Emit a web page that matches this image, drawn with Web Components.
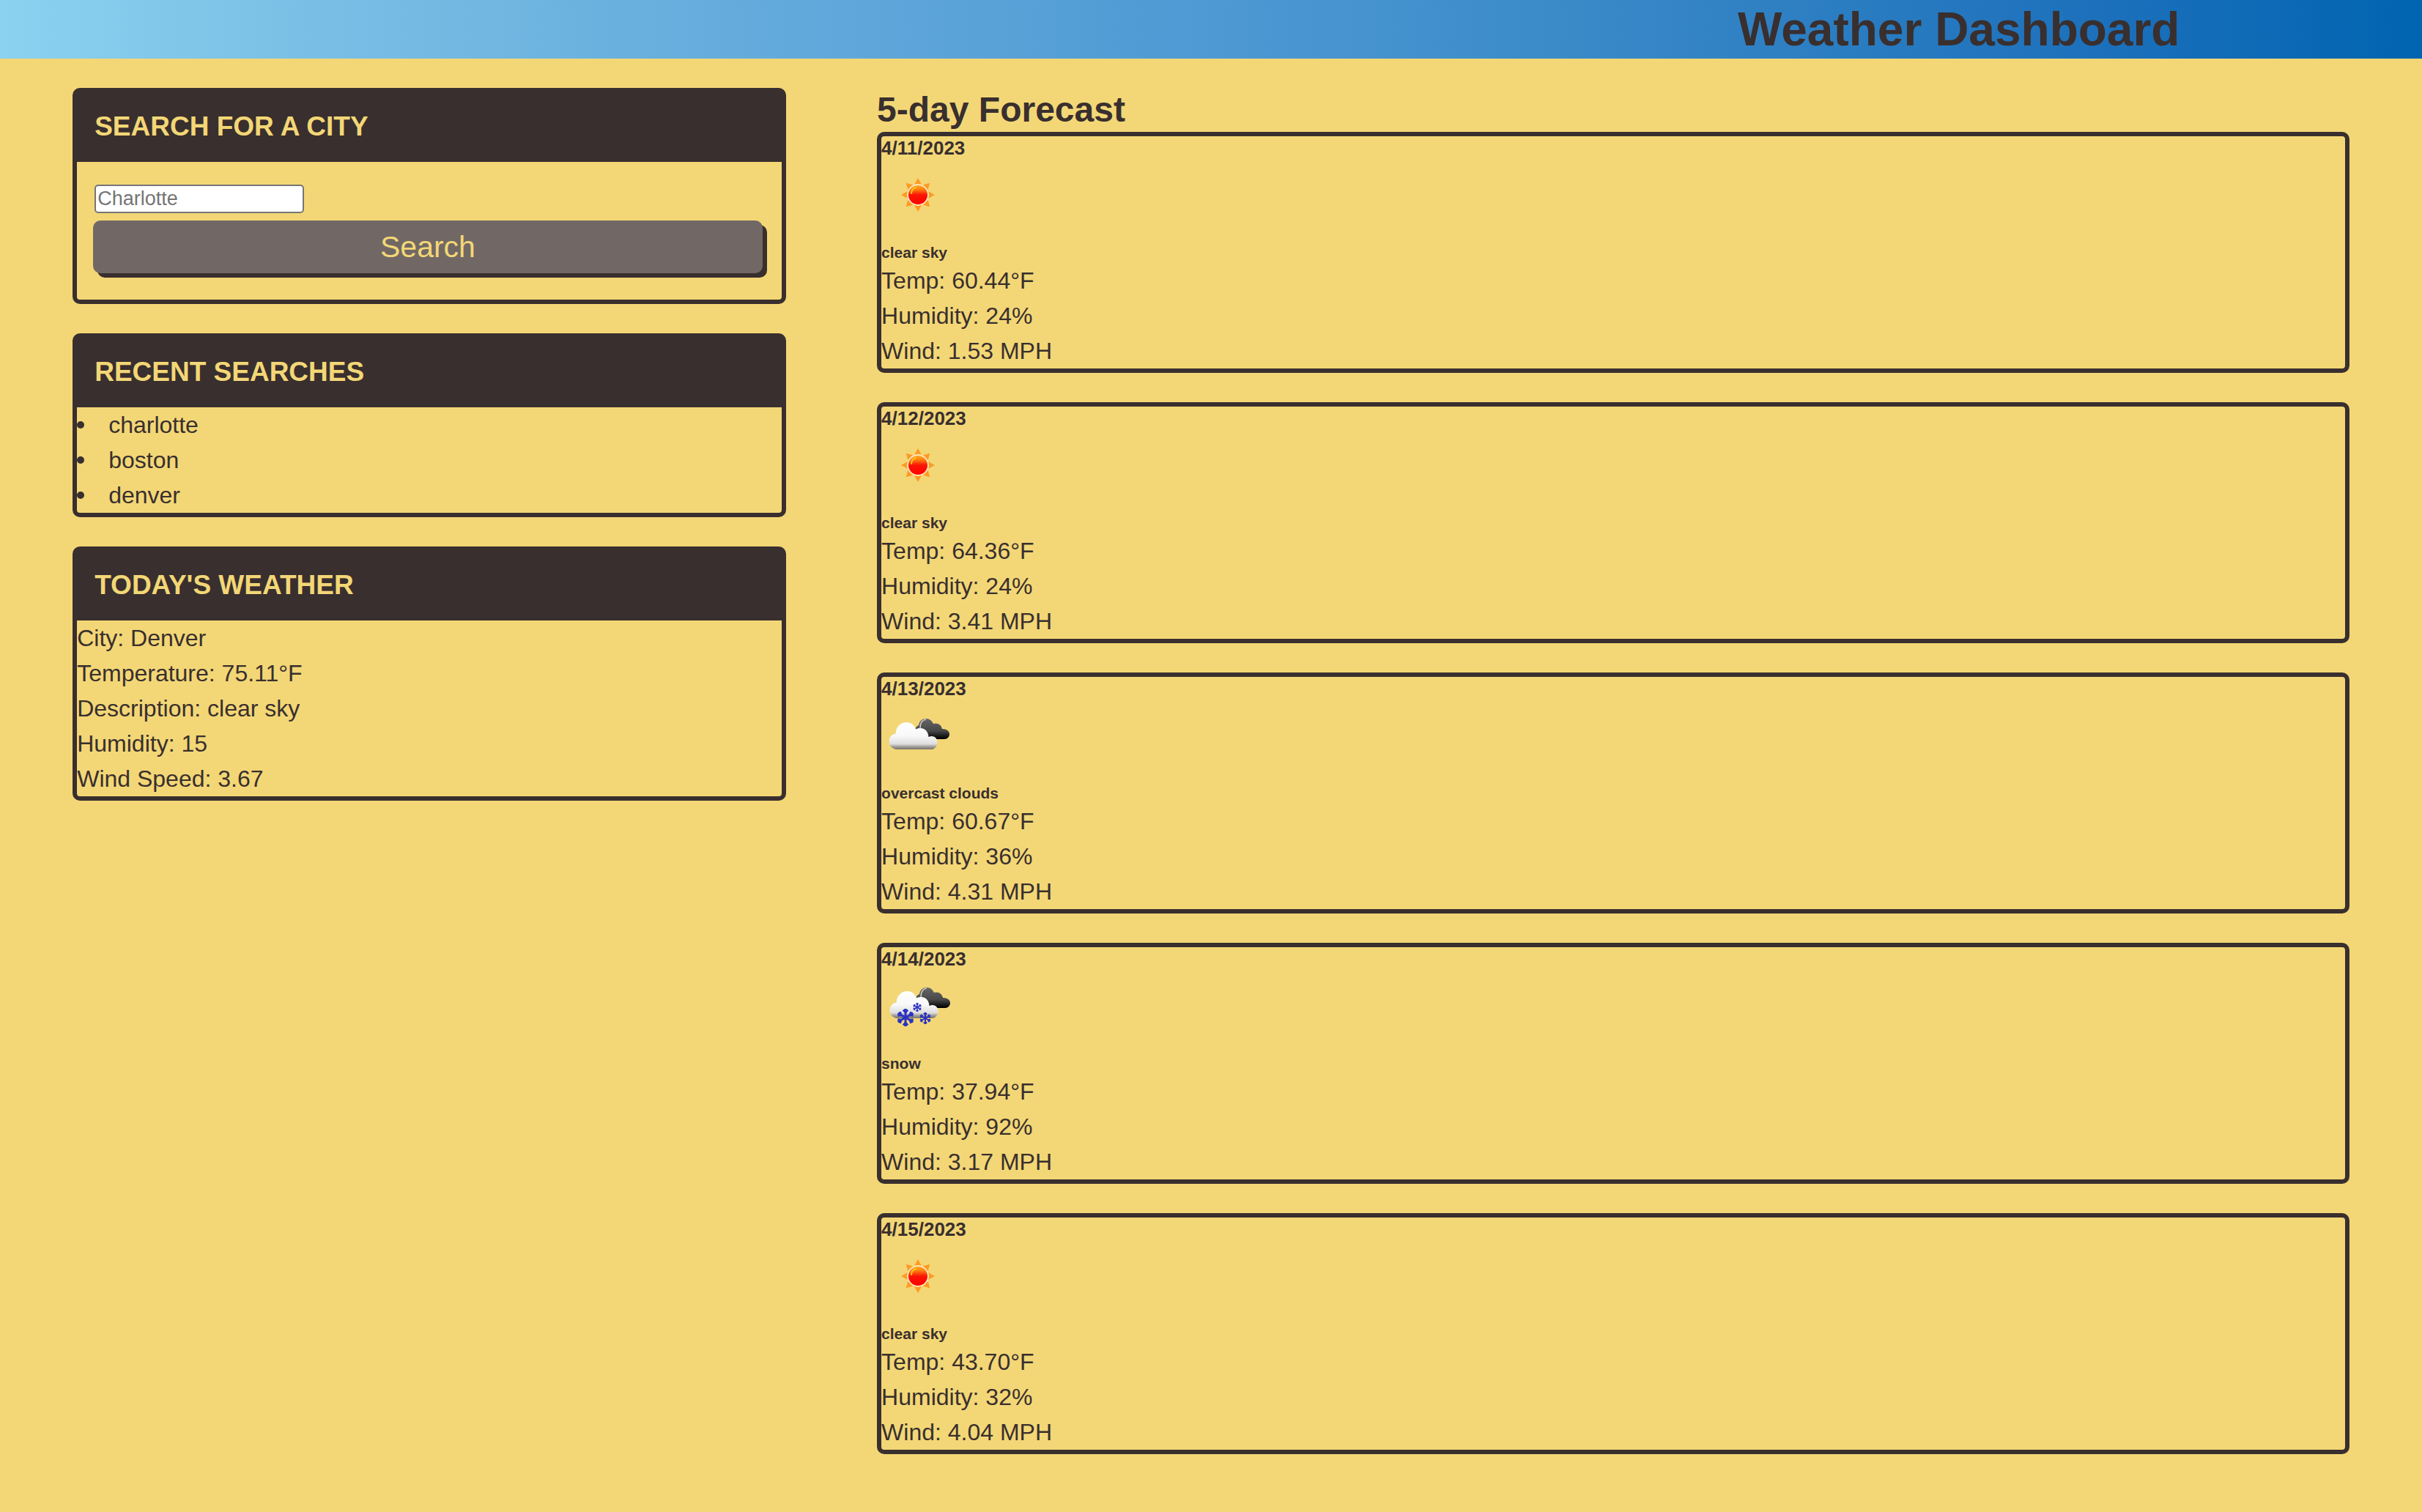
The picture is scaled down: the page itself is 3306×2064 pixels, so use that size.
<!DOCTYPE html>
<html lang="en">
<head>
<meta charset="utf-8">
<title>Weather Dashboard</title>
<style>
:root { --dark: #392f2e; --sand: #f3d776; --muted: #716865; }
body { margin: 0; background: var(--sand); color: var(--dark); font: 32px/48px "Liberation Sans", Arial, sans-serif; }
</style>
</head>
<body>
<weather-app></weather-app>
<script>
const define = (name, html, init) => {
  const template = document.createElement('template');
  template.innerHTML = html;
  customElements.define(name, class extends HTMLElement {
    constructor() {
      super();
      this.attachShadow({ mode: 'open' }).append(template.content.cloneNode(true));
    }
    connectedCallback() { if (init) init(this, this.shadowRoot); }
  });
};

define('page-banner', `
<style>
:host { display: block; background: linear-gradient(to right, #8ad2f0, #7cc3e7 10%, #6bb1df 25%, #4e99d4 50%, #3a8ac8 65%, #1c70bb 87%, #0064b1); }
h1 { margin: 0; padding-right: 10%; text-align: right; font-size: 64px; line-height: 80px; }
</style>
<header><h1><slot></slot></h1></header>`);

define('panel-card', `
<style>
:host { display: block; border: 6px solid var(--dark); border-radius: 10px; }
h3 { margin: 0; padding: 23px 24px 25px; background: var(--dark); color: var(--sand); font-size: 37px; line-height: 47px; text-transform: uppercase; }
</style>
<section><h3><slot name="title"></slot></h3><slot></slot></section>`);

define('city-search', `
<style>
:host { display: block; }
form { display: flex; flex-direction: column; align-items: flex-start; gap: 10px; padding: 31px 26px 36px 22px; }
label { display: flex; margin-left: 2px; }
input { box-sizing: border-box; width: 286px; height: 39px; margin: 0; padding: 2px; border: 2px solid #767676; border-radius: 5px; background: #fff; font: 27px "Liberation Sans", Arial, sans-serif; }
input::placeholder { color: #757575; }
button { width: 100%; margin: 0; padding: 12px; border: 0; border-radius: 10px; background: var(--muted); color: var(--sand); box-shadow: 6px 6px var(--dark); font: 41px/48px "Liberation Sans", Arial, sans-serif; }
</style>
<form>
<label><input type="text" placeholder="Charlotte" aria-label="City"></label>
<button type="button">Search</button>
</form>`);

define('recent-list', `
<style>
:host { display: block; }
ul { margin: 0; padding: 0; list-style: none; }
li { display: flex; align-items: center; gap: 33px; }
li::before { content: ""; width: 10px; height: 10px; border-radius: 50%; background: currentColor; }
</style>
<ul><li>charlotte</li><li>boston</li><li>denver</li></ul>`);

define('today-weather', `
<style>
:host { display: block; }
p { margin: 0; }
</style>
<p>City: Denver</p><p>Temperature: 75.11°F</p><p>Description: clear sky</p><p>Humidity: 15</p><p>Wind Speed: 3.67</p>`);

const clouds = `
<defs>
<linearGradient id="w" x1="0" y1="0" x2="0" y2="1"><stop offset="0" stop-color="#fff"/><stop offset=".5" stop-color="#f8f8f8"/><stop offset=".8" stop-color="#dedede"/><stop offset=".9" stop-color="#a09e9b"/><stop offset="1" stop-color="#77736a"/></linearGradient>
<linearGradient id="k" x1="0" y1="0" x2="0" y2="1"><stop offset="0" stop-color="#666"/><stop offset=".6" stop-color="#484848"/><stop offset=".8" stop-color="#222"/><stop offset="1" stop-color="#000"/></linearGradient>
</defs>
<path fill="url(#k)" d="M46 42Q46 36 51 34C52 28 56 25 61 25C66 25 69 28 71 32C76 30 82 33 83 39C89 39 93 42 93 46C93 50 90 53 86 53H56Z"/>
<path fill="none" stroke="#d2d0cb" stroke-width="1.500" d="M53 38Q53 27 61 26"/>
<path fill="url(#w)" d="M20 67C8 65 7 48 19.500 45.500C20 34 29 30 34 30C41 30 45 34 47 39.500C57 35 64 41 64.500 50C72 47 76.500 52 76.500 57C76.500 63 72 67 69 67Z"/>`;

const flake = (x, y, r) => {
  let s = '';
  for (let a = 0; a < 360; a += 60)
    s += `<path transform="translate(${x} ${y}) rotate(${a}) scale(${r / 12})" d="M0 0V-12M-3 -10.500L0 -7L3 -10.500"/>`;
  return s;
};

const icons = {
  sun: `
<defs>
<linearGradient id="s" x1="0" y1="0" x2="0" y2="1"><stop offset="0" stop-color="#ffb020"/><stop offset=".25" stop-color="#ff7a10"/><stop offset=".5" stop-color="#fb1405"/><stop offset="1" stop-color="#f00"/></linearGradient>
</defs>
<g fill="#ff9a22">${[0, 45, 90, 135, 180, 225, 270, 315].map(a => `<path transform="rotate(${a} 50 48)" d="M45 34L50 25L55 34Z"/>`).join('')}</g>
<circle cx="50" cy="48" r="14" fill="url(#s)" stroke="#ffe6b8" stroke-width="2"/>
<path fill="none" stroke="#ffc21c" stroke-width="2" stroke-linecap="round" d="M41 46Q41 40 47 38"/>`,
  clouds,
  snow: `<g transform="translate(1 -2)">${clouds}</g><g fill="none" stroke="#2b32c4" stroke-width="3">${flake(33, 64, 12)}${flake(60, 65, 8)}${flake(49, 50, 6)}</g>`
};

define('weather-icon', `
<style>
:host { display: block; }
svg { display: block; width: 100px; height: 100px; }
</style>
<svg viewBox="0 0 100 100" aria-hidden="true"></svg>`,
  (el, root) => { root.querySelector('svg').innerHTML = icons[el.getAttribute('name')] || ''; });

define('forecast-card', `
<style>
:host { display: block; border: 6px solid var(--dark); border-radius: 10px; }
h4, h6, p { margin: 0; }
h4 { font-size: 26px; line-height: 32px; }
h6 { margin-top: 12px; font-size: 21px; line-height: 29px; }
</style>
<article>
<h4></h4>
<div class="icon"></div>
<h6></h6>
<p class="temp"></p><p class="humidity"></p><p class="wind"></p>
</article>`,
  (el, root) => {
    const d = el.dataset;
    const icon = document.createElement('weather-icon');
    icon.setAttribute('name', d.icon);
    root.querySelector('.icon').replaceChildren(icon);
    root.querySelector('h4').textContent = d.date;
    root.querySelector('h6').textContent = d.sky;
    root.querySelector('.temp').textContent = `Temp: ${d.temp}°F`;
    root.querySelector('.humidity').textContent = `Humidity: ${d.humidity}%`;
    root.querySelector('.wind').textContent = `Wind: ${d.wind} MPH`;
  });

define('weather-app', `
<style>
:host { display: block; }
main { display: flex; gap: 4%; padding: 40px 3%; }
aside { flex: 31.33; min-width: 0; display: flex; flex-direction: column; gap: 40px; }
.forecast { flex: 64.67; min-width: 0; }
h2 { margin: 0; font-size: 48px; line-height: 60px; }
.days { display: flex; flex-direction: column; gap: 40px; }
</style>
<page-banner>Weather Dashboard</page-banner>
<main>
<aside>
<panel-card><span slot="title">Search for a city</span><city-search></city-search></panel-card>
<panel-card><span slot="title">Recent searches</span><recent-list></recent-list></panel-card>
<panel-card><span slot="title">Today's weather</span><today-weather></today-weather></panel-card>
</aside>
<section class="forecast">
<h2>5-day Forecast</h2>
<div class="days">
<forecast-card data-date="4/11/2023" data-icon="sun" data-sky="clear sky" data-temp="60.44" data-humidity="24" data-wind="1.53"></forecast-card>
<forecast-card data-date="4/12/2023" data-icon="sun" data-sky="clear sky" data-temp="64.36" data-humidity="24" data-wind="3.41"></forecast-card>
<forecast-card data-date="4/13/2023" data-icon="clouds" data-sky="overcast clouds" data-temp="60.67" data-humidity="36" data-wind="4.31"></forecast-card>
<forecast-card data-date="4/14/2023" data-icon="snow" data-sky="snow" data-temp="37.94" data-humidity="92" data-wind="3.17"></forecast-card>
<forecast-card data-date="4/15/2023" data-icon="sun" data-sky="clear sky" data-temp="43.70" data-humidity="32" data-wind="4.04"></forecast-card>
</div>
</section>
</main>`);
</script>
</body>
</html>
